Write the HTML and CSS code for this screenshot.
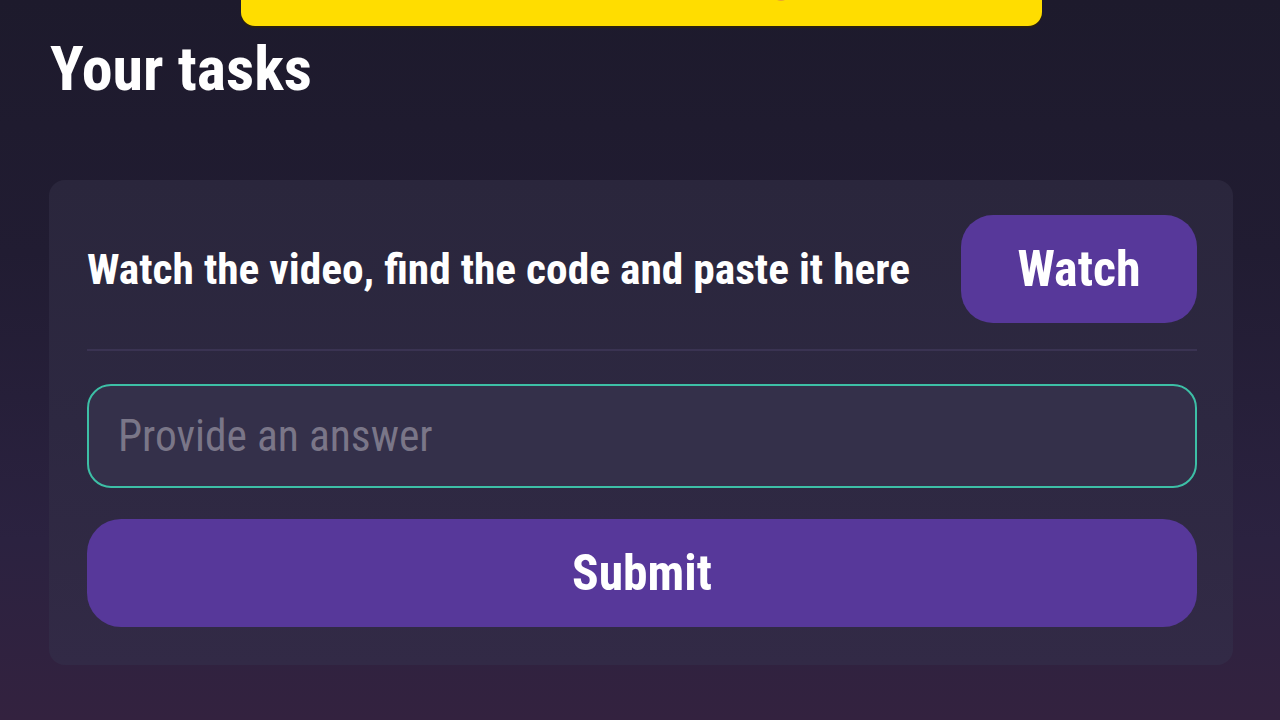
FILE: index.html
```html
<!DOCTYPE html>
<html lang="en">
<head>
<meta charset="utf-8">
<title>Your tasks</title>
<link rel="stylesheet" href="styles.css">
</head>
<body>
<div class="page">
  <div class="banner"><span class="banner-dot"></span></div>
  <h1 class="title">Your tasks</h1>
  <section class="card">
    <div class="task-row">
      <p class="task-text">Watch the video, find the code and paste it here</p>
      <button class="btn btn-watch" type="button">Watch</button>
    </div>
    <hr class="divider">
    <input class="answer" type="text" placeholder="Provide an answer">
    <button class="btn btn-submit" type="button">Submit</button>
  </section>
</div>
</body>
</html>
```
FILE: styles.css
```css
* { box-sizing: border-box; }
html, body {
  margin: 0;
  padding: 0;
  width: 1280px;
  height: 720px;
  overflow: hidden;
}
body {
  font-family: "Roboto Condensed", Roboto, "Liberation Sans", sans-serif;
  font-stretch: condensed;
  color: #ffffff;
  background: linear-gradient(180deg, #1d1a2c 0%, #211c32 35%, #2b2240 75%, #33223f 100%);
}
.page {
  position: relative;
  height: 720px;
  padding: 0 47px 0 49px;
}
.banner {
  position: relative;
  margin: -40px auto 0;
  width: 801px;
  height: 66px;
  background: #ffdd00;
  border-radius: 0 0 14px 14px;
  box-shadow: 0 2px 0 #2a2010;
}
.banner-dot {
  position: absolute;
  left: 534px;
  top: 33px;
  width: 12px;
  height: 8px;
  border-radius: 50%;
  background: #e8a630;
}
.title {
  margin: 13px 0 0 1px;
  font-size: 62px;
  font-weight: 700;
  line-height: 60px;
  letter-spacing: 0;
}
.card {
  margin-top: 81px;
  height: 485px;
  border-radius: 16px;
  background: linear-gradient(180deg, #2a263c 0%, #2d2841 50%, #322a46 100%);
  padding: 35px 36px 0 38px;
  display: flex;
  flex-direction: column;
}
.task-row {
  display: flex;
  align-items: center;
  justify-content: space-between;
  height: 108px;
}
.task-text {
  margin: 0;
  font-size: 43.4px;
  font-weight: 700;
}
.btn {
  font-family: inherit;
  font-stretch: condensed;
  color: #ffffff;
  border: 0;
  background: #57389a;
  font-weight: 700;
  padding: 0;
}
.btn-watch {
  width: 236px;
  height: 108px;
  border-radius: 32px;
  font-size: 50px;
}
.divider {
  margin: 26px 0 0;
  border: 0;
  height: 2px;
  background: #3a3352;
}
.answer {
  margin-top: 33px;
  height: 104px;
  width: 100%;
  border: 2px solid #3dbfa6;
  border-radius: 24px;
  background: #34304a;
  padding: 0 29px;
  font-family: inherit;
  font-stretch: condensed;
  font-size: 43.5px;
  color: #ffffff;
  outline: none;
}
.answer::placeholder {
  color: #7a7688;
}
.btn-submit {
  margin-top: 31px;
  height: 108px;
  width: 100%;
  border-radius: 34px;
  font-size: 49.5px;
}
```
